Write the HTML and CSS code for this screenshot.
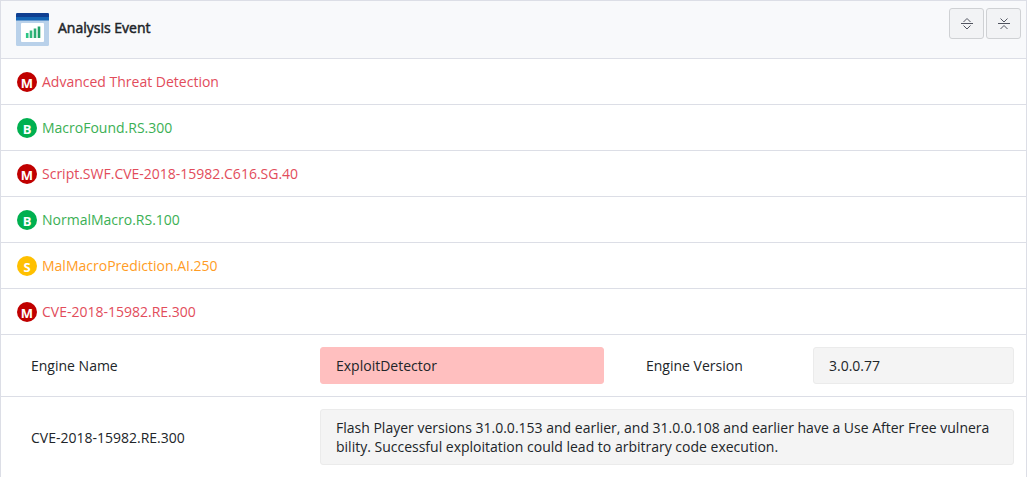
FILE: index.html
```html
<!DOCTYPE html>
<html lang="en">
<head>
<meta charset="utf-8">
<title>Analysis Event</title>
<link rel="stylesheet" href="styles.css">
</head>
<body>
<section class="card">
  <header class="card-header">
    <svg class="card-icon" viewBox="0 0 33 33" aria-hidden="true">
      <rect width="33" height="33" rx="1.5" fill="#b9d1ea"/>
      <path d="M0 7.500V1.500Q0 0 1.500 0h30Q33 0 33 1.500V7.500z" fill="#1565b4"/>
      <path d="M0 4V1.500Q0 0 1.500 0h30Q33 0 33 1.500V4z" fill="#103f91"/>
      <rect x="5" y="10" width="23" height="19" rx="1" fill="#fff"/>
      <path d="M11.200 20v5" stroke="#2cc585" stroke-width="2.600"/>
      <path d="M15 17.500V25" stroke="#30b77b" stroke-width="2.600"/>
      <path d="M19 15.500V25" stroke="#2bad72" stroke-width="2.600"/>
      <path d="M23 13.500V25" stroke="#22a168" stroke-width="2.600"/>
    </svg>
    <h1 class="card-title">Analysis Event</h1>
    <div class="card-tools">
      <button class="tool" type="button" aria-label="Expand all">
        <svg class="tool-icon" viewBox="0 0 12 12" aria-hidden="true"><path d="M0 5.500h12M2.500 4L6 .5 9.500 4M2.500 7.500L6 11 9.500 7.500"/></svg>
      </button>
      <button class="tool" type="button" aria-label="Collapse all">
        <svg class="tool-icon" viewBox="0 0 12 12" aria-hidden="true"><path d="M0 5.500h12M2.500 .5L6 4 9.500 .5M2.500 11L6 7.500 9.500 11"/></svg>
      </button>
    </div>
  </header>
  <button class="event malicious" type="button" aria-expanded="false"><span class="badge">M</span>Advanced Threat Detection</button>
  <button class="event benign" type="button" aria-expanded="false"><span class="badge">B</span>MacroFound.RS.300</button>
  <button class="event malicious" type="button" aria-expanded="false"><span class="badge">M</span>Script.SWF.CVE-2018-15982.C616.SG.40</button>
  <button class="event benign" type="button" aria-expanded="false"><span class="badge">B</span>NormalMacro.RS.100</button>
  <button class="event suspicious" type="button" aria-expanded="false"><span class="badge">S</span>MalMacroPrediction.AI.250</button>
  <button class="event malicious" type="button" aria-expanded="true"><span class="badge">M</span>CVE-2018-15982.RE.300</button>
  <dl class="detail">
    <dt class="label">Engine Name</dt>
    <dd class="value alert">ExploitDetector</dd>
    <dt class="label second">Engine Version</dt>
    <dd class="value">3.0.0.77</dd>
  </dl>
  <dl class="detail">
    <dt class="label">CVE-2018-15982.RE.300</dt>
    <dd class="value wide">Flash Player versions 31.0.0.153 and earlier, and 31.0.0.108 and earlier have a Use After Free vulnerability. Successful exploitation could lead to arbitrary code execution.</dd>
  </dl>
</section>
</body>
</html>
```
FILE: styles.css
```css
* {
  box-sizing: border-box;
}

body {
  margin: 0;
  background: #fff;
  color: #212529;
  font-family: "Open Sans", "Noto Sans", sans-serif;
  font-size: 14px;
  line-height: 19px;
}

.card {
  margin-right: 1px;
  border: 1px solid #dcdee6;
  border-bottom: 0;
}

.card-header {
  display: flex;
  align-items: flex-start;
  padding: 7px 5px 12px 15px;
  background: #f8f9fb;
}

.card-icon {
  width: 33px;
  height: 33px;
  margin-top: 5px;
}

.card-title {
  margin: 10px auto 0 9px;
  font-size: 14px;
  font-weight: 400;
  -webkit-text-stroke: 0.5px currentColor;
}

.card-tools {
  display: flex;
  gap: 2px;
}

.tool {
  display: flex;
  align-items: center;
  justify-content: center;
  width: 35px;
  height: 31px;
  padding: 0;
  border: 1px solid #cfd1d4;
  border-radius: 3px;
  background: #f2f3f5;
}

.tool-icon {
  width: 12px;
  height: 12px;
  fill: none;
  stroke: #50535f;
}

.event {
  display: flex;
  align-items: flex-start;
  gap: 5px;
  width: 100%;
  padding: 13px 16px 12px;
  border: 0;
  border-top: 1px solid #dcdee6;
  background: #fff;
  font: inherit;
  text-align: left;
}

.badge {
  width: 20px;
  height: 20px;
  border-radius: 50%;
  color: #fff;
  font-size: 13px;
  font-weight: 700;
  line-height: 22px;
  text-align: center;
}

.malicious {
  color: #e24c5b;
}

.malicious .badge {
  background: #c00000;
}

.benign {
  color: #3bb054;
}

.benign .badge {
  background: #00b050;
}

.suspicious {
  color: #ff9c25;
}

.suspicious .badge {
  background: #ffc000;
}

.detail {
  display: grid;
  grid-template-columns: 289fr 284fr 209fr 201fr;
  align-items: center;
  margin: 0;
  padding: 12px 12px 12px 30px;
  border-top: 1px solid #dcdee6;
}

.second {
  padding-left: 42px;
}

.value {
  margin: 0;
  padding: 8px 18px 8px 15px;
  border: 1px solid #ebebeb;
  border-radius: 3px;
  background: #f4f4f4;
  word-break: break-all;
}

.alert {
  border-color: #ffbfbf;
  background: #ffbfbf;
}

.wide {
  grid-column: 2 / -1;
}
```
